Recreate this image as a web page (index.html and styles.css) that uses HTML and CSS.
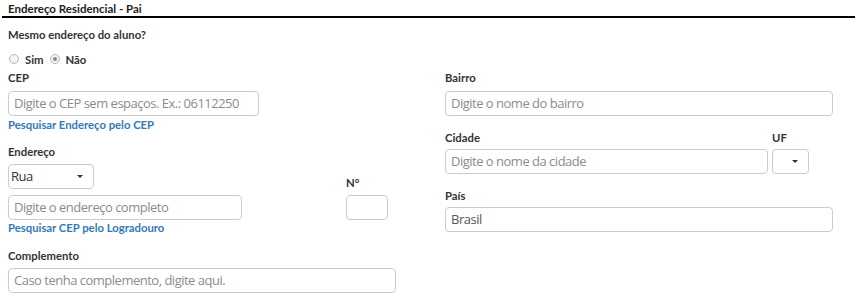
FILE: index.html
```html
<!DOCTYPE html>
<html lang="pt-BR">
<head>
<meta charset="utf-8">
<link rel="stylesheet" href="styles.css">
</head>
<body>
<div class="legend">Endereço Residencial - Pai</div>
<div class="question">Mesmo endereço do aluno?</div>
<div class="radios">
  <span class="radio"></span><span class="rlabel">Sim</span>
  <span class="radio checked"></span><span class="rlabel">Não</span>
</div>
<div class="grid">
  <div class="col">
    <div class="label lbl-top">CEP</div>
    <div class="input cep placeholder">Digite o CEP sem espaços. Ex.: 06112250</div>
    <a class="link link1">Pesquisar Endereço pelo CEP</a>
    <div class="label lbl-end">Endereço</div>
    <div class="end-row">
      <div class="end-main">
        <div class="select rua"><span>Rua</span><span class="caret"></span></div>
        <div class="input endereco placeholder">Digite o endereço completo</div>
      </div>
      <div class="num">
        <div class="label">N°</div>
        <div class="input numero"></div>
      </div>
    </div>
    <a class="link link2">Pesquisar CEP pelo Logradouro</a>
    <div class="label lbl-comp">Complemento</div>
    <div class="input full placeholder">Caso tenha complemento, digite aqui.</div>
  </div>
  <div class="col">
    <div class="label lbl-top">Bairro</div>
    <div class="input full placeholder">Digite o nome do bairro</div>
    <div class="city-row">
      <div class="city">
        <div class="label lbl-r">Cidade</div>
        <div class="input placeholder">Digite o nome da cidade</div>
      </div>
      <div class="uf">
        <div class="label lbl-r">UF</div>
        <div class="select ufsel"><span class="caret"></span></div>
      </div>
    </div>
    <div class="label lbl-r lbl-pais">País</div>
    <div class="input full">Brasil</div>
  </div>
</div>
</body>
</html>
```
FILE: styles.css
```css
* { box-sizing: border-box; }
body {
  margin: 0;
  background: #fff;
  font-family: "Lato", "Open Sans", sans-serif;
  color: #333;
}
.legend {
  margin-left: 2px;
  padding: 2px 0 0 6px;
  height: 18px;
  font-size: 11.5px;
  font-weight: 700;
  border-bottom: 2px solid #000;
  line-height: 13px;
  color: #222;
}
.question {
  margin: 10px 0 0 8px;
  font-size: 11.3px;
  font-weight: 700;
  line-height: 14px;
}
.radios {
  display: flex;
  align-items: center;
  margin: 10px 0 0 9px;
  height: 14px;
}
.radio {
  width: 10px; height: 10px;
  border: 1px solid #b8b8b8;
  border-radius: 50%;
  background: #f3f3f3;
  position: relative;
}
.radio.checked::after {
  content: "";
  position: absolute;
  left: 2px; top: 2px;
  width: 4px; height: 4px;
  border-radius: 50%;
  background: #8a8a8a;
}
.rlabel {
  font-size: 11.3px;
  font-weight: 700;
  margin: 0 6px;
}
.grid {
  display: grid;
  grid-template-columns: 388px 388px;
  column-gap: 49px;
  padding-left: 8px;
  margin-top: 5px;
}
.label {
  font-size: 11.3px;
  font-weight: 700;
  line-height: 14px;
  margin-bottom: 5px;
}
.lbl-top { margin-bottom: 6px; }
.input, .select {
  height: 25px;
  border: 1px solid #ccc;
  border-radius: 4px;
  font-family: "Open Sans", "Lato", sans-serif;
  font-size: 13px;
  letter-spacing: -0.5px;
  line-height: 23px;
  padding: 0 5px;
  color: #555;
  white-space: nowrap;
  overflow: hidden;
}
.placeholder { color: #8c8c8c; }
.cep { width: 251px; }
.full { width: 388px; }
.link {
  display: block;
  color: #337ab7;
  font-size: 11.3px;
  font-weight: 700;
  line-height: 14px;
}
.link1 { margin-top: 2px; }
.link2 { margin-top: 1px; }
.lbl-end { margin-top: 13px; }
.end-row { display: flex; gap: 104px; }
.select {
  display: flex;
  align-items: center;
  justify-content: space-between;
  padding: 0 10px 0 2px;
}
.rua { width: 86px; color: #333; }
.endereco { width: 234px; margin-top: 6px; }
.num { display: flex; flex-direction: column; justify-content: flex-end; }
.numero { width: 42px; }
.caret {
  width: 0; height: 0;
  border-left: 3px solid transparent;
  border-right: 3px solid transparent;
  border-top: 3px solid #333;
}
.lbl-comp { margin-top: 14px; }
.city-row { display: flex; gap: 4px; margin-top: 15px; }
.lbl-r { margin-bottom: 4px; }
.city { width: 323px; }
.uf { width: 37px; }
.ufsel { width: 37px; padding: 0 10px 0 0; justify-content: flex-end; }
.lbl-pais { margin-top: 15px; }
```
